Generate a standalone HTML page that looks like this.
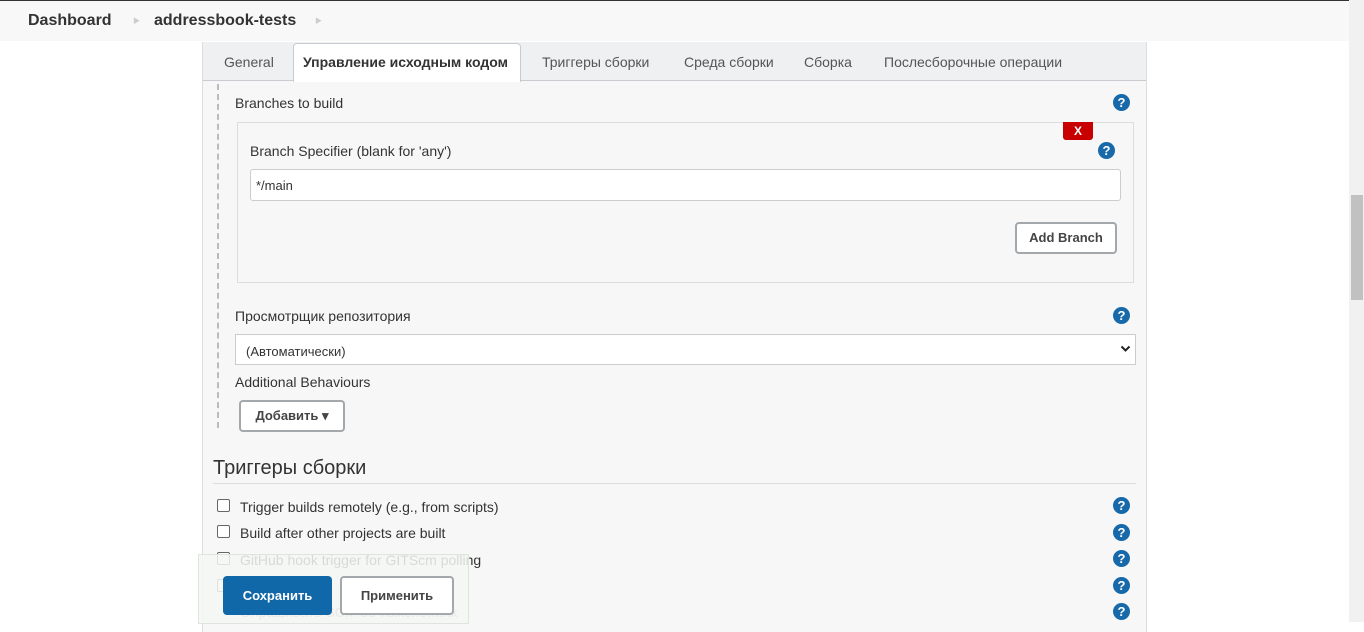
<!DOCTYPE html>
<html><head><meta charset="utf-8"><style>
*{box-sizing:border-box;margin:0;padding:0}
body{width:1364px;height:622px;overflow:hidden;background:#fff;font-family:"Liberation Sans","Noto Sans CJK SC",sans-serif;color:#333;font-size:14px;position:relative}
.a{position:absolute;white-space:nowrap}
.q{position:absolute;width:17px;height:17px;border-radius:50%;background:#1769aa;color:#fff;font-weight:bold;font-size:13px;text-align:center;line-height:17px}
.cb{position:absolute;width:13px;height:13px;border:1px solid #666;border-radius:2px;background:#fff}
.btn{position:absolute;border:2px solid #a3a8ad;border-radius:4px;background:#fff;font-weight:bold;font-size:13px;color:#444;text-align:center}
</style></head><body>
<div class="a" style="left:0;top:0;width:1364px;height:41px;background:#f8f8f8;border-top:1px solid #333"></div>
<div class="a" style="left:28px;top:12px;font-weight:bold;font-size:16px;color:#333">Dashboard</div>
<div class="a" style="left:133px;top:16px;font-size:7px;color:#ccc">▶</div>
<div class="a" style="left:154px;top:12px;font-weight:bold;font-size:16px;color:#333">addressbook-tests</div>
<div class="a" style="left:315px;top:16px;font-size:7px;color:#ccc">▶</div>

<div class="a" style="left:202px;top:42px;width:945px;height:590px;background:#f7f7f8;border-left:1px solid #ddd;border-right:1px solid #ddd"></div>
<div class="a" style="left:203px;top:42px;width:943px;height:39px;background:#eef0f2;border-bottom:1px solid #c8ccd0"></div>
<div class="a" style="left:224px;top:54px;color:#555">General</div>
<div class="a" style="left:293px;top:43px;width:228px;height:39px;background:#fff;border:1px solid #c8ccd0;border-bottom:none;border-radius:4px 4px 0 0"></div>
<div class="a" style="left:303px;top:54px;font-weight:bold;color:#333">Управление исходным кодом</div>
<div class="a" style="left:542px;top:54px;color:#555">Триггеры сборки</div>
<div class="a" style="left:684px;top:54px;color:#555">Среда сборки</div>
<div class="a" style="left:804px;top:54px;color:#555">Сборка</div>
<div class="a" style="left:884px;top:54px;color:#555">Послесборочные операции</div>

<div class="a" style="left:217px;top:84px;height:344px;border-left:2px dashed #bbb"></div>
<div class="a" style="left:235px;top:95px">Branches to build</div>
<div class="q" style="left:1113px;top:94px">?</div>
<div class="a" style="left:237px;top:122px;width:897px;height:161px;border:1px solid #ddd;background:#f7f7f8"></div>
<div class="a" style="left:1063px;top:122px;width:30px;height:18px;background:#c80000;color:#fff;font-weight:bold;font-size:12px;text-align:center;line-height:18px;border-radius:0 0 3px 3px">X</div>
<div class="a" style="left:250px;top:143px">Branch Specifier (blank for 'any')</div>
<div class="q" style="left:1098px;top:142px">?</div>
<div class="a" style="left:250px;top:169px;width:871px;height:32px;background:#fff;border:1px solid #ccc;border-radius:3px;padding:8px 5px;font-size:13px">*/main</div>
<div class="btn" style="left:1015px;top:222px;width:102px;height:32px;line-height:28px">Add Branch</div>

<div class="a" style="left:235px;top:308px">Просмотрщик репозитория</div>
<div class="q" style="left:1113px;top:307px">?</div>
<div class="a" style="left:235px;top:334px;width:901px;height:31px;background:#fff;border:1px solid #ccc;padding:9px 10px;font-size:13px">(Автоматически)</div>
<svg class="a" style="left:1120px;top:345px" width="11" height="8" viewBox="0 0 11 8"><path d="M1.5 1.5L5.5 5.5L9.5 1.5" stroke="#222" stroke-width="2" fill="none"/></svg>
<div class="a" style="left:235px;top:374px">Additional Behaviours</div>
<div class="btn" style="left:239px;top:400px;width:106px;height:32px;line-height:28px">Добавить ▾</div>

<div class="a" style="left:213px;top:457px;font-size:20px;color:#333">Триггеры сборки</div>
<div class="a" style="left:213px;top:483px;width:923px;border-top:1px solid #ddd"></div>
<div class="cb" style="left:217px;top:499px"></div><div class="a" style="left:240px;top:499px">Trigger builds remotely (e.g., from scripts)</div>
<div class="cb" style="left:217px;top:525px"></div><div class="a" style="left:240px;top:525px">Build after other projects are built</div>
<div class="cb" style="left:217px;top:552px"></div><div class="a" style="left:240px;top:552px">GitHub hook trigger for GITScm polling</div>
<div class="cb" style="left:217px;top:579px"></div>
<div class="a" style="left:240px;top:604px;color:#999">Опрашивать SCM об изменениях</div>
<div class="q" style="left:1113px;top:497px">?</div>
<div class="q" style="left:1113px;top:524px">?</div>
<div class="q" style="left:1113px;top:550px">?</div>
<div class="q" style="left:1113px;top:577px">?</div>
<div class="q" style="left:1113px;top:603px">?</div>

<div class="a" style="left:198px;top:554px;width:271px;height:70px;background:rgba(245,247,245,0.85);border:1px solid #dde5dd"></div>
<div class="a" style="left:223px;top:576px;width:109px;height:39px;background:#1168a8;border-radius:4px;color:#fff;font-weight:bold;font-size:13px;text-align:center;line-height:39px">Сохранить</div>
<div class="btn" style="left:340px;top:576px;width:114px;height:39px;line-height:35px">Применить</div>

<div class="a" style="left:1349px;top:0;width:15px;height:622px;background:#f1f1f1"></div>
<div class="a" style="left:1351px;top:195px;width:12px;height:105px;background:#c1c1c1"></div>
</body></html>
